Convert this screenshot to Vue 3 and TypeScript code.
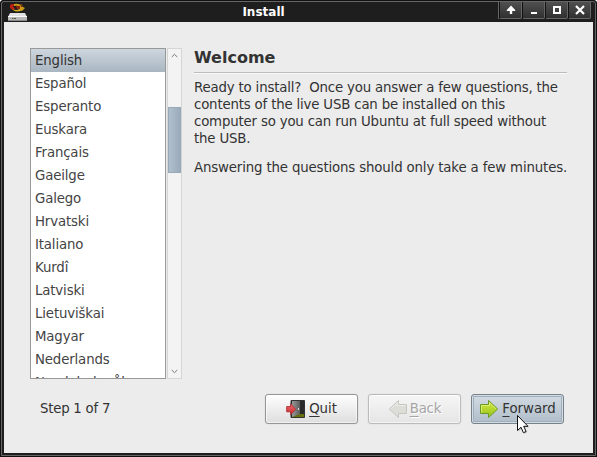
<script setup lang="ts">
import { ref } from 'vue'

const languages: string[] = [
  'English', 'Español', 'Esperanto', 'Euskara', 'Français', 'Gaeilge', 'Galego', 'Hrvatski',
  'Italiano', 'Kurdî', 'Latviski', 'Lietuviškai', 'Magyar', 'Nederlands', 'Norsk bokmål',
]
const selected = ref('English')
</script>

<template>
  <div class="window">
    <header class="titlebar">
      <svg class="app-icon" width="20" height="18" viewBox="0 0 20 18">
        <path d="M2 10h15l2 4v4H0v-4z" fill="#e2e2e2" />
        <path d="M0 14h19v4H0z" fill="#b8b8b8" />
        <path d="M0 13h19v1H0z" fill="#fafafa" />
        <path d="M4 15h1v1H4zM6 15h2v1H6z" fill="#555" />
        <path d="M5 15h1v1H5z" fill="#7ba22a" />
        <path d="M0 17h19v1H0z" fill="#888" />
        <path d="M2 5V2l2-1h3v1L5 3l2 3-2 1z" fill="#c01e12" />
        <path d="M6 1q6-1 9 3l2 1-3 3-4-2 2-2Q10 2 6 3z" fill="#c99a12" />
        <path d="M4 6q4 2 8 0l2 1q-5 3-9 0z" fill="#d2b01d" />
        <path d="M8 3h4v3H9z" fill="#8d2412" />
        <path d="M12 1h2l1 3h-2z" fill="#7d3a10" />
      </svg>
      <h1 class="title">Install</h1>
      <div class="controls">
        <button class="control" aria-label="Shade">
          <svg width="10" height="10" viewBox="0 0 10 10"><path d="M5 .5 9.2 5v1H6.2v3H3.8V6H.8V5z" fill="#fff" /></svg>
        </button>
        <button class="control" aria-label="Minimize">
          <svg width="10" height="10" viewBox="0 0 10 10"><path d="M2 7h6v2H2z" fill="#fff" /></svg>
        </button>
        <button class="control" aria-label="Maximize">
          <svg width="10" height="10" viewBox="0 0 10 10"><path d="M1 1h8v8H1zM3 3v4h4V3z" fill="#fff" fill-rule="evenodd" /></svg>
        </button>
        <button class="control" aria-label="Close">
          <svg width="10" height="10" viewBox="0 0 10 10"><path d="m1 1 8 8M9 1 1 9" stroke="#fff" stroke-width="2.2" /></svg>
        </button>
      </div>
    </header>

    <main class="content">
      <section class="picker">
        <ul class="languages">
          <li v-for="l in languages" :key="l" :class="{ selected: l === selected }" @click="selected = l">{{ l }}</li>
        </ul>
        <div class="scrollbar">
          <svg width="7" height="5" viewBox="0 0 7 5"><path d="m.7 4 2.8-2.7L6.3 4" fill="none" stroke="#777" /></svg>
          <div class="thumb"></div>
          <svg class="down" width="7" height="5" viewBox="0 0 7 5"><path d="M.7 1l2.8 2.7L6.3 1" fill="none" stroke="#777" /></svg>
        </div>
      </section>
      <section class="message">
        <h2>Welcome</h2>
        <p class="intro">Ready to install?&nbsp; Once you answer a few questions, the<br />contents of the live USB can be installed on this<br />computer so you can run Ubuntu at full speed without<br />the USB.</p>
        <p>Answering the questions should only take a few minutes.</p>
      </section>
    </main>

    <footer class="footer">
      <span class="step">Step 1 of 7</span>
      <button class="btn">
        <svg width="20" height="20" viewBox="0 0 20 20">
          <defs>
            <linearGradient id="door" x2="1" y2="0"><stop stop-color="#999" /><stop offset="1" stop-color="#5c5c5c" /></linearGradient>
            <linearGradient id="red" x2="0" y2="1"><stop stop-color="#f07878" /><stop offset="1" stop-color="#c81e24" /></linearGradient>
          </defs>
          <path d="M5 1.5h13.5v17H5z" fill="#2a2a2a" stroke="#333" />
          <path d="M6 15h12v3H6z" fill="#66700f" />
          <path d="M6 2h8v13l-8 3z" fill="url(#door)" />
          <path d="M12 9h1v2h-1z" fill="#ddd" />
          <path d="M.7 7.6h4V4.8l5 5.5-5 5.3v-2.8h-4z" fill="url(#red)" stroke="#b02a2e" stroke-width=".9" />
        </svg>
        <span><u>Q</u>uit</span>
      </button>
      <button class="btn disabled">
        <svg width="20" height="20" viewBox="0 0 20 20">
          <path d="M18.5 5.5h-8v-4L1.3 10l9.2 8.5v-4h8z" fill="#dcddd7" stroke="#c4c6bf" />
          <path d="M17.5 6.5h-8v-2.7L2.8 10" fill="none" stroke="#ecece8" />
        </svg>
        <span><u>B</u>ack</span>
      </button>
      <button class="btn focused">
        <svg width="20" height="20" viewBox="0 0 20 20">
          <defs>
            <linearGradient id="green" x2="0" y2="1"><stop stop-color="#d3e840" /><stop offset="1" stop-color="#98c41c" /></linearGradient>
          </defs>
          <path d="M1.5 5.5h8v-4l9.2 8.5-9.2 8.5v-4h-8z" fill="url(#green)" stroke="#6a9a25" />
          <path d="M2.5 13.5v-7h8V3.8l6.7 6.2" fill="none" stroke="#e6f58a" stroke-opacity=".7" />
        </svg>
        <span><u>F</u>orward</span>
      </button>
    </footer>
    <svg class="pointer" width="14" height="21" viewBox="0 0 14 21">
      <path d="M2.5 2.5v15l3.5-3.3 2.4 5.5 2.7-1.2-2.4-5.2H13z" fill="#000" opacity=".2" />
      <path d="M1.5 1.5v15l3.5-3.3 2.4 5.5 2.7-1.2-2.4-5.2H12z" fill="#fff" stroke="#111" />
    </svg>
  </div>
</template>

<style>
body {
  overflow: hidden;
  background: #fff;
}
</style>

<style scoped>
* {
  box-sizing: border-box;
}

.window {
  position: relative;
  width: 597px;
  height: 457px;
  padding: 0 4px 4px;
  border-radius: 4px 4px 0 0;
  background: #1e1e1e;
  color: #333;
  font: 13.333px/17px 'DejaVu Sans', sans-serif;
  letter-spacing: -0.15px;
  display: flex;
  flex-direction: column;
}

.window::before {
  content: '';
  position: absolute;
  inset: 1px;
  border: 1px solid #666;
  border-radius: 3px 3px 0 0;
  box-shadow: 0 0 0 1px #111;
  pointer-events: none;
}

.titlebar {
  height: 22px;
  flex: none;
  display: grid;
  grid-template-columns: 95px 1fr 95px;
}

.app-icon {
  margin: 3px 0 0 4px;
}

.title {
  margin: 4px 0 0;
  padding-right: 70px;
  text-align: center;
  color: #fff;
  font-size: 12px;
  line-height: 17px;
  letter-spacing: 0;
}

.controls {
  display: flex;
  height: 18px;
  margin-top: 1px;
  border-left: 1px solid #666;
  width: 93px;
}

.control {
  width: 23px;
  padding: 0 0 1px;
  border: 1px solid #666;
  border-left-color: #111;
  border-radius: 0 0 2px 2px;
  background: linear-gradient(#505050, #303030);
  display: flex;
  align-items: center;
  justify-content: center;
}

.content {
  background: #ececec;
  height: 357px;
  flex: none;
  padding: 26px 26px 0;
  display: flex;
  gap: 12px;
}

.picker {
  width: 152px;
  height: 331px;
  display: flex;
  gap: 1px;
}

.languages {
  width: 136px;
  margin: 0;
  padding: 0;
  border: 1px solid #999;
  background: #fff;
  overflow: hidden;
  list-style: none;
}

.languages li {
  height: 23px;
  padding-left: 4px;
  line-height: 23px;
  color: #444;
}

.languages .selected {
  background: linear-gradient(#ced6de, #a9b6c1);
  color: #333;
}

.scrollbar {
  width: 15px;
  border: 1px solid #d5d5d5;
  background: #f3f3f3;
  display: flex;
  flex-direction: column;
  align-items: center;
  padding: 4px 0;
}

.thumb {
  width: 13px;
  height: 66px;
  margin-top: 49px;
  border: 1px solid #97a8b7;
  background: linear-gradient(90deg, #b1bfcc, #9aabbb);
}

.down {
  margin-top: auto;
}

.message {
  width: 373px;
}

h2 {
  margin: 0 0 6px;
  height: 25px;
  border-bottom: 1px solid #bcbcbc;
  box-shadow: 0 1px #fafafa;
  font-size: 16px;
  line-height: 19px;
  letter-spacing: 0;
}

p {
  margin: 0 0 12px;
  white-space: nowrap;
}

.intro {
  letter-spacing: -0.18px;
}

.footer {
  flex: 1;
  padding: 15px 29px 0 36px;
  background: #ececec;
  display: flex;
  align-items: flex-start;
  gap: 10px;
}

.step {
  flex: 1;
  line-height: 29px;
  letter-spacing: -0.25px;
}

.btn {
  width: 93px;
  height: 30px;
  padding: 0;
  border: 1px solid #969696;
  border-radius: 3px;
  background: linear-gradient(#fefefe, #dedede);
  box-shadow: inset 0 0 0 1px #ffffff90, 0 0 1px #bbb;
  color: #333;
  font: inherit;
  letter-spacing: -0.05px;
  display: flex;
  align-items: center;
  justify-content: center;
  gap: 3px;
}

.btn span {
  margin-top: -2px;
}

.btn u {
  text-decoration-thickness: 1px;
  text-underline-offset: 3px;
}

.disabled {
  gap: 2px;
  border-color: #bbb;
  background: linear-gradient(#f6f6f6, #e5e5e5);
  color: #a5a5a5;
  text-shadow: 1px 1px #fff;
  letter-spacing: -0.2px;
}

.focused {
  border-color: #77818a;
  background: linear-gradient(#d3dbe2, #afbdc9);
  box-shadow: inset 0 0 0 1px #d5dde4, inset 0 0 0 2px #a0afbd;
}

.pointer {
  position: absolute;
  left: 516px;
  top: 414px;
}
</style>
